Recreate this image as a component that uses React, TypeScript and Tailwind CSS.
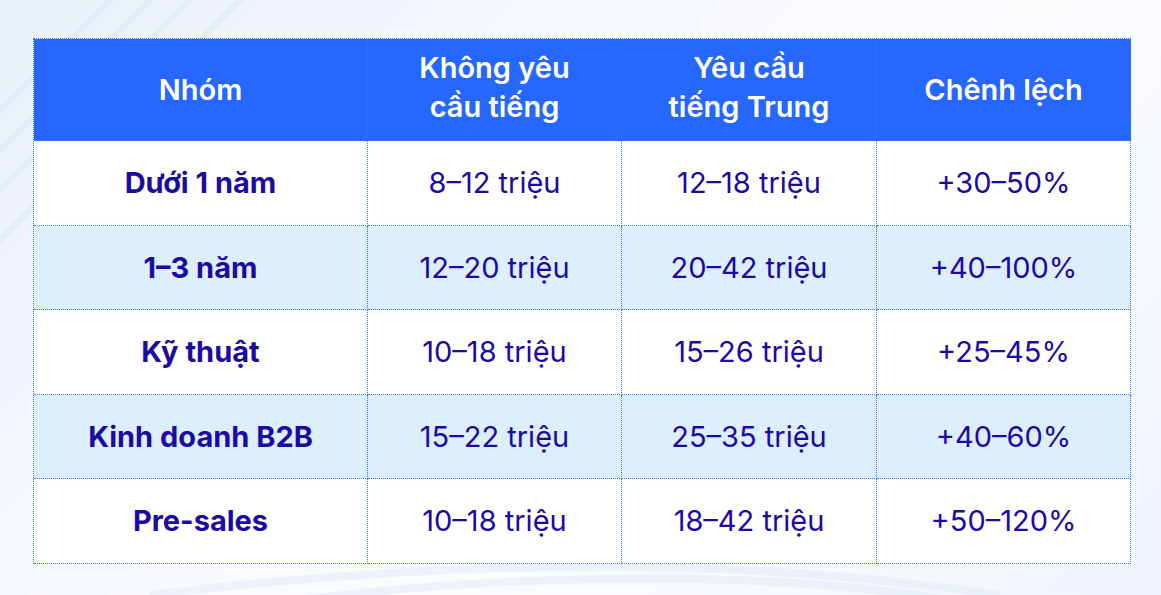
import React from 'react'

type Row = {
  group: string
  without: string
  withChinese: string
  diff: string
}

const rows: Row[] = [
  { group: 'Dưới 1 năm', without: '8–12 triệu', withChinese: '12–18 triệu', diff: '+30–50%' },
  { group: '1–3 năm', without: '12–20 triệu', withChinese: '20–42 triệu', diff: '+40–100%' },
  { group: 'Kỹ thuật', without: '10–18 triệu', withChinese: '15–26 triệu', diff: '+25–45%' },
  { group: 'Kinh doanh B2B', without: '15–22 triệu', withChinese: '25–35 triệu', diff: '+40–60%' },
  { group: 'Pre-sales', without: '10–18 triệu', withChinese: '18–42 triệu', diff: '+50–120%' },
]

const cell =
  'flex items-center justify-center text-center border-r border-b border-dotted border-[#3574ff]'
const head = `${cell} h-[102px] bg-[#2668ff] text-[29px] font-semibold leading-[39px] text-white`

export default function App() {
  return (
    <div
      className="relative h-[595px] w-[1161px] overflow-hidden bg-[linear-gradient(135deg,#e9f0fa_0%,#f5f8fd_30%,#fbfcfe_60%,#f0f5fc_100%)]"
      style={{ fontFamily: 'Inter, "Noto Sans", sans-serif' }}
    >
      <Streaks />
      <div className="relative pl-[33px] pt-[38px]">
        <div className="grid w-[1098px] grid-cols-[334px_254px_255px_254px] border-l border-t border-dotted border-[#3574ff]">
          <div className={head}>Nhóm</div>
          <div className={`${head} pb-[5px]`}>
            Không yêu
            <br />
            cầu tiếng
          </div>
          <div className={`${head} pb-[5px]`}>
            Yêu cầu
            <br />
            tiếng Trung
          </div>
          <div className={head}>Chênh lệch</div>
          {rows.map((row, index) => {
            const bg = index % 2 === 1 ? 'bg-[#ddeeff]' : 'bg-white'
            return (
              <React.Fragment key={row.group}>
                <div className={`${cell} ${bg} h-[84.5px] text-[29px] font-bold text-[#1c0aa5]`}>
                  {row.group}
                </div>
                <div className={`${cell} ${bg} h-[84.5px] text-[29px] text-[#1c0aa5]`}>
                  {row.without}
                </div>
                <div className={`${cell} ${bg} h-[84.5px] text-[29px] text-[#1c0aa5]`}>
                  {row.withChinese}
                </div>
                <div className={`${cell} ${bg} h-[84.5px] text-[29px] text-[#1c0aa5]`}>
                  {row.diff}
                </div>
              </React.Fragment>
            )
          })}
        </div>
      </div>
    </div>
  )
}

function Streaks() {
  return (
    <svg className="absolute inset-0" width="1161" height="595" viewBox="0 0 1161 595" fill="none">
      <g stroke="#dfe8f6" strokeWidth="6" opacity="0.7">
        <path d="M-40 150 L120 -10" />
        <path d="M-40 190 L160 -10" />
        <path d="M-40 230 L200 -10" />
        <path d="M-20 260 L250 -10" />
      </g>
      <g stroke="#e2eaf7" strokeWidth="8" opacity="0.5">
        <path d="M150 595 C 400 565, 700 550, 1000 595" />
        <path d="M300 600 C 500 575, 750 568, 950 600" />
      </g>
    </svg>
  )
}
